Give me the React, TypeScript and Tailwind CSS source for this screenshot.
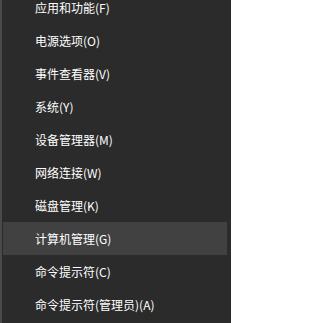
import React from "react";

const items = [
  "应用和功能(F)",
  "电源选项(O)",
  "事件查看器(V)",
  "系统(Y)",
  "设备管理器(M)",
  "网络连接(W)",
  "磁盘管理(K)",
  "计算机管理(G)",
  "命令提示符(C)",
  "命令提示符(管理员)(A)",
];

export default function App() {
  return (
    <div
      className="w-[231px] h-[323px] overflow-hidden bg-[#2b2b2b] border-l-2 border-[#4a4a4a] flex"
      style={{ fontFamily: '"Noto Sans CJK SC", "Noto Sans", sans-serif' }}
    >
      <div className="flex flex-col w-full pl-px pr-[4px] mt-[-9px]">
        {items.map((t, i) => (
          <div
            key={t}
            className={
              "h-[33px] shrink-0 flex items-center pl-[32px] text-[12px] text-white " +
              (i === 7 ? "bg-[#414141]" : "")
            }
          >
            {t}
          </div>
        ))}
      </div>
    </div>
  );
}
